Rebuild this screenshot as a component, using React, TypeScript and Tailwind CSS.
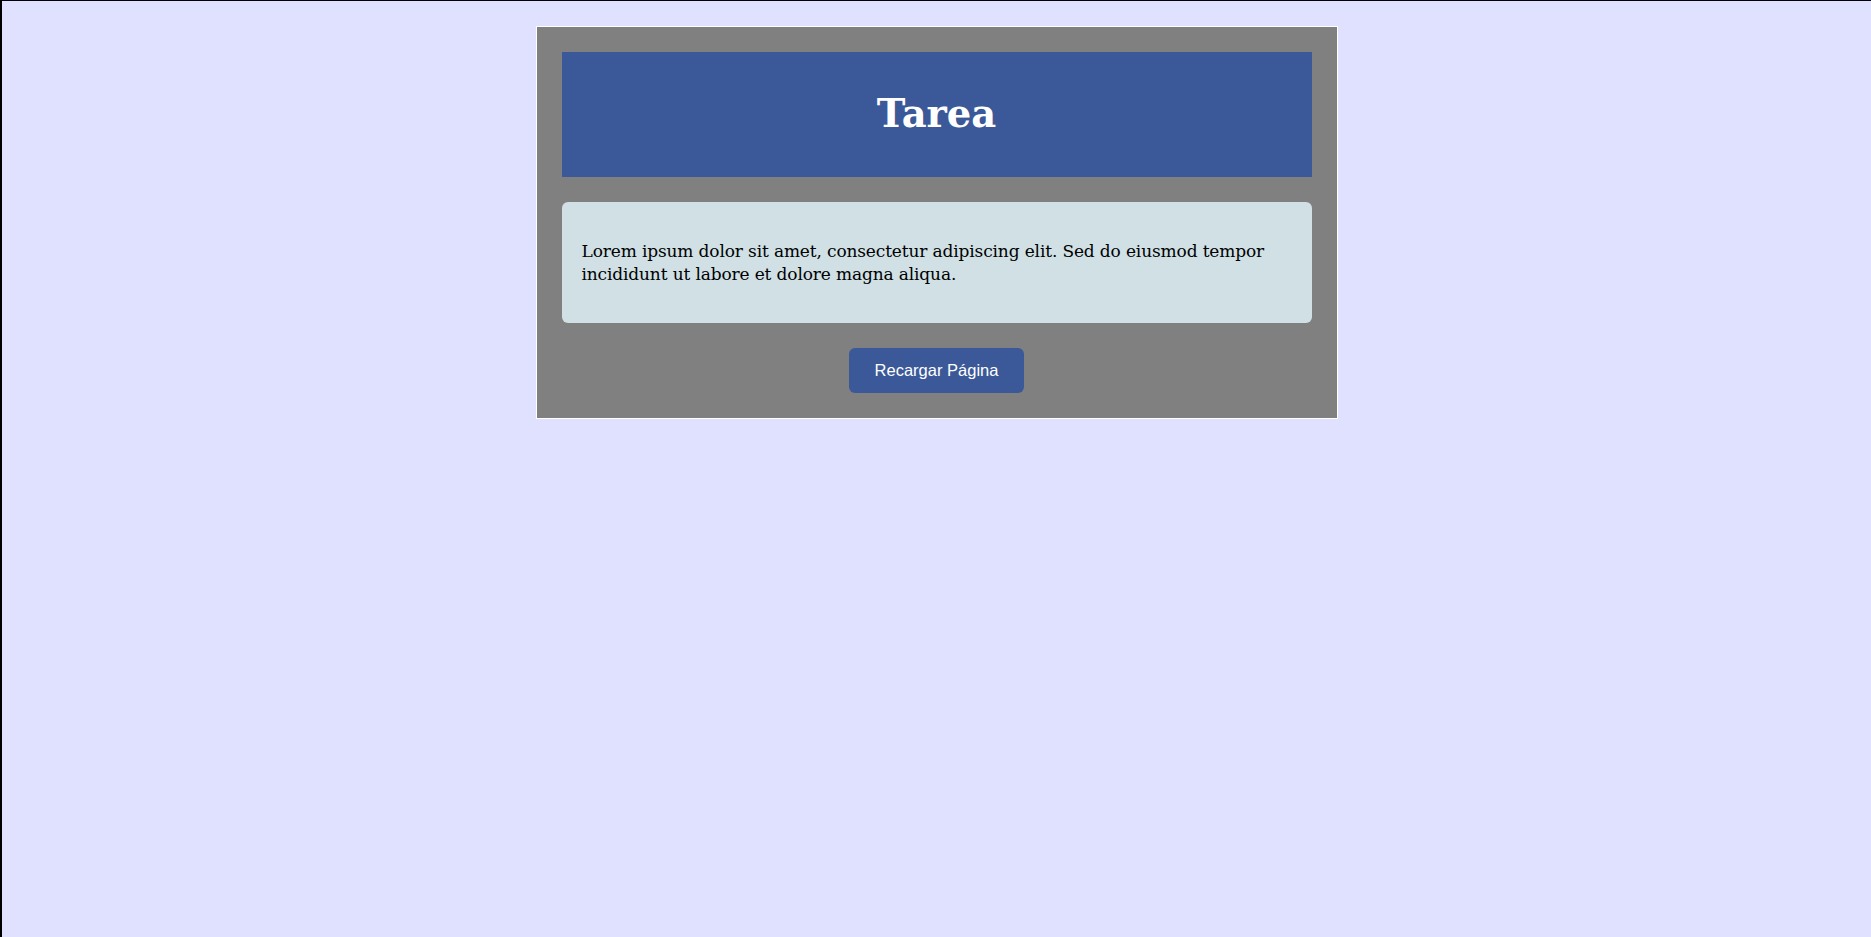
const App = () => {
  return (
    <div className="min-h-screen bg-[#e0e0ff] border-t border-l-2 border-black pt-[25px]">
      <div className="mx-auto w-[802px] border border-white bg-[#808080] p-[25px] flex flex-col items-center">
        <div className="w-full h-[125px] bg-[#3b5998] flex items-center justify-center">
          <h1 className="text-white font-bold text-[38.5px] leading-none font-['DejaVu_Serif',Georgia,serif]">
            Tarea
          </h1>
        </div>
        <div className="w-full mt-[25px] bg-[#d0e0e5] rounded-md px-[20px] py-[20px]">
          <p className="my-[18px] text-[17px] tracking-[-0.14px] leading-[22.5px] text-black font-['DejaVu_Serif',Georgia,serif]">
            Lorem ipsum dolor sit amet, consectetur adipiscing elit. Sed do eiusmod tempor incididunt ut labore et dolore magna aliqua.
          </p>
        </div>
        <button className="mt-[25px] h-[45px] px-[26px] rounded-md bg-[#3b5998] text-white text-[16.5px] font-['Liberation_Sans',Arial,sans-serif]">
          Recargar Página
        </button>
      </div>
    </div>
  );
};

export default App;
